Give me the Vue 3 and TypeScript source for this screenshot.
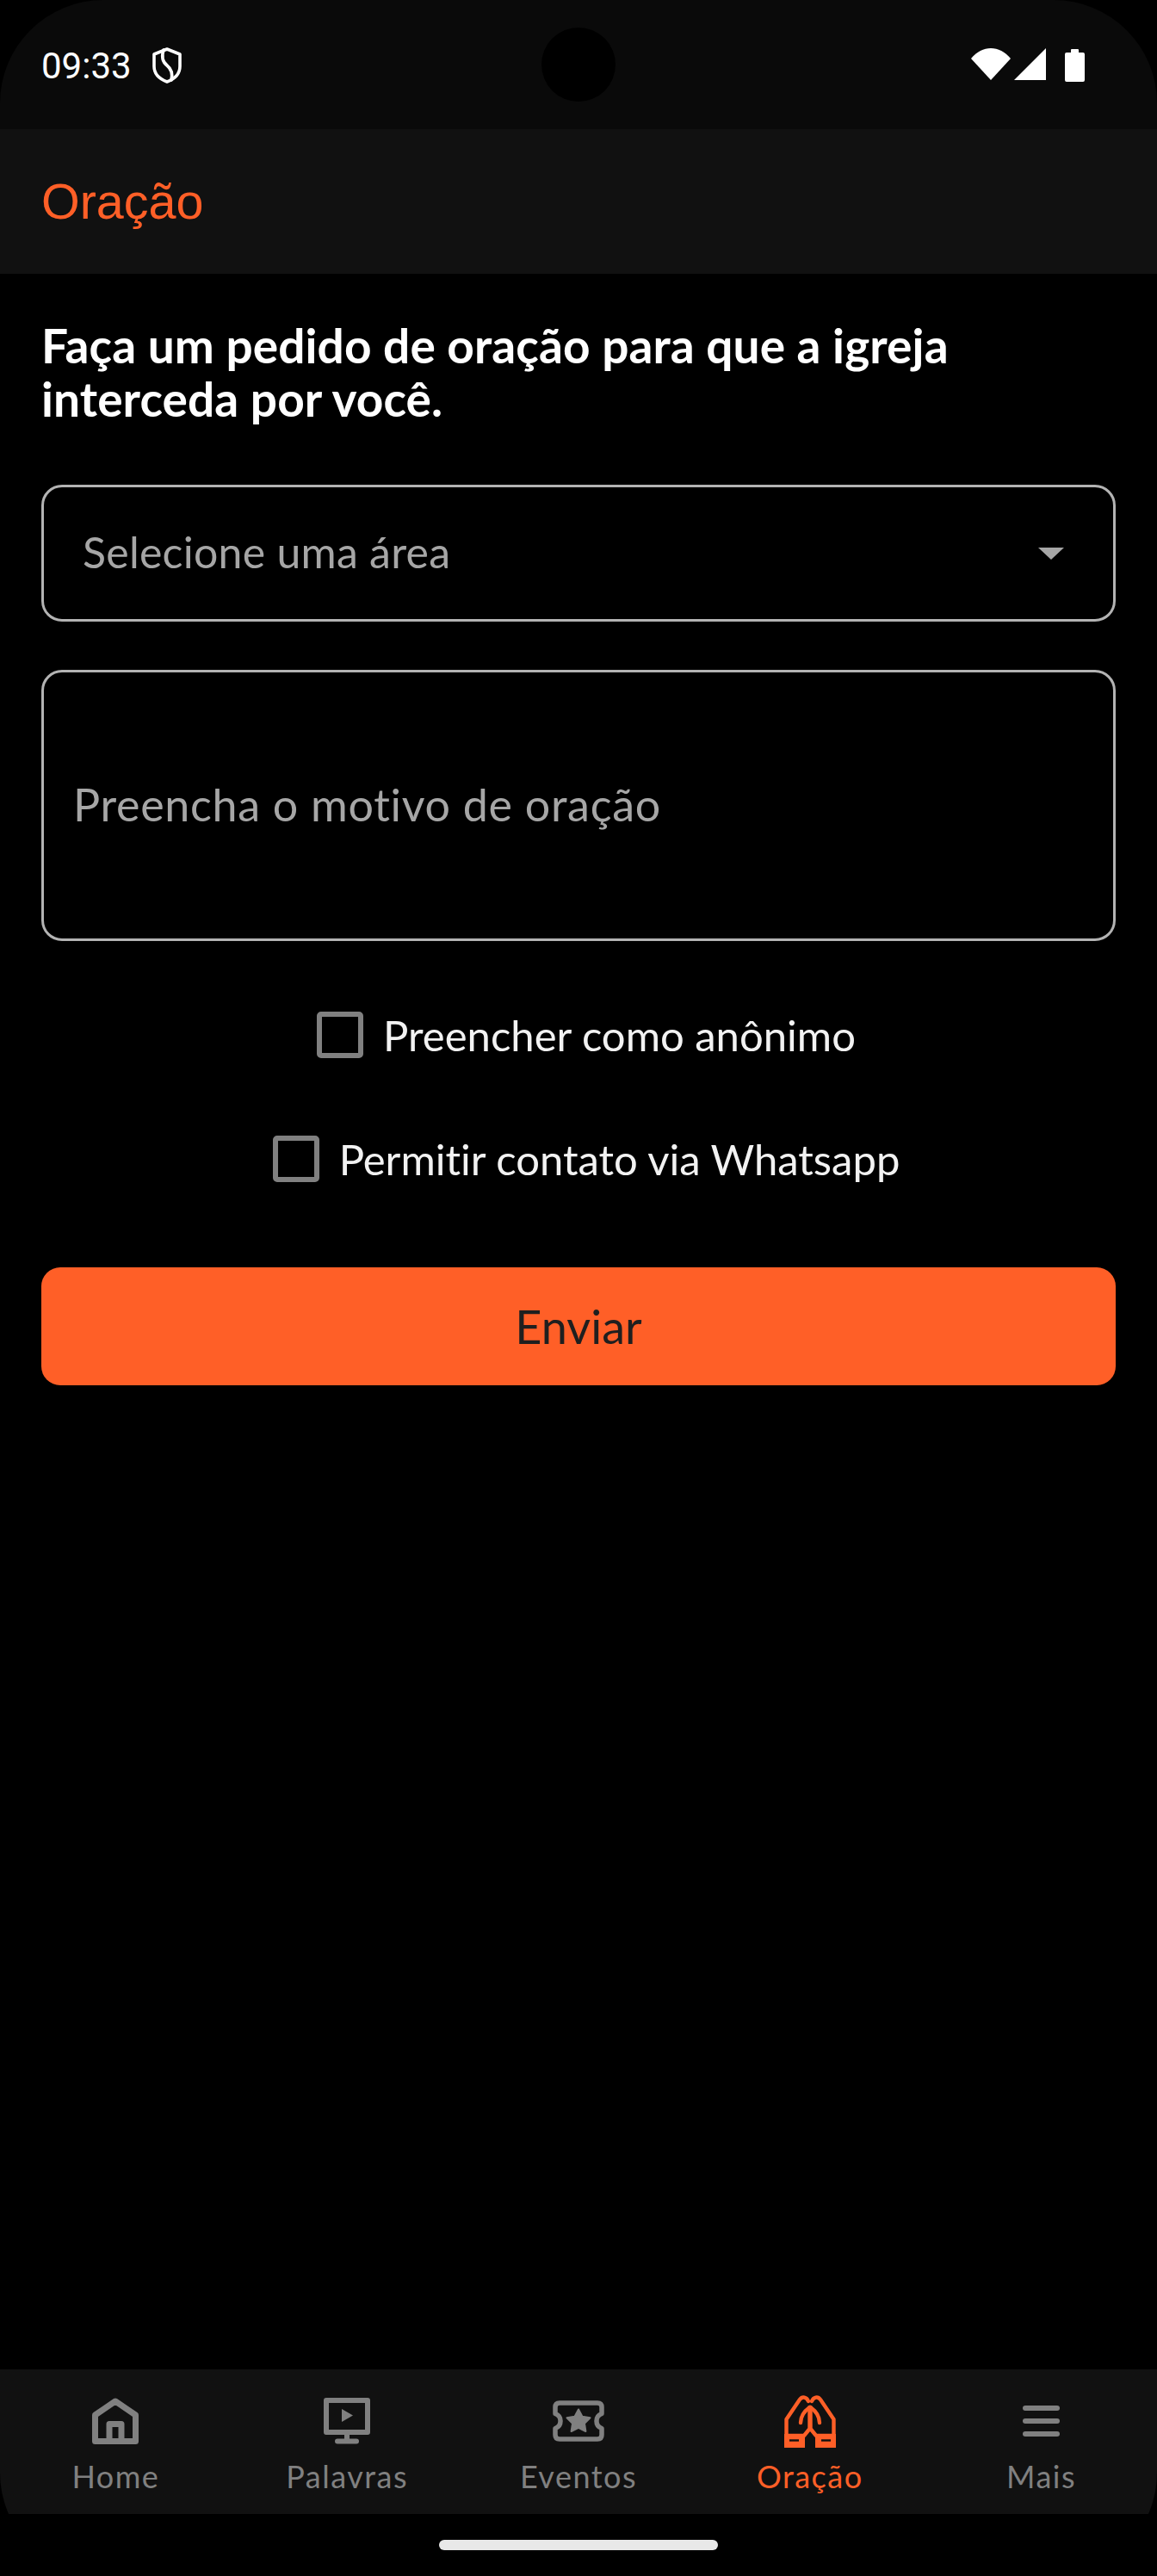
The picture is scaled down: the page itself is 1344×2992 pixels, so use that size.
<script setup lang="ts">
// Tela de pedido de oração: tudo vem destas listas para o template ficar curto
type Tab = { label: string; icon: string; active?: boolean }

const checks: string[] = ['Preencher como anônimo', 'Permitir contato via Whatsapp']

const tabs: Tab[] = [
  { label: 'Home', icon: 'home' },
  { label: 'Palavras', icon: 'screen' },
  { label: 'Eventos', icon: 'ticket' },
  { label: 'Oração', icon: 'pray', active: true },
  { label: 'Mais', icon: 'menu' },
]
</script>

<template>
  <div class="screen">
    <div class="statusbar">
      <div class="status-left">
        <span class="time">09:33</span>
        <svg class="shield" viewBox="0 0 34 42" fill="none" stroke="#fff" stroke-width="3.6" stroke-linejoin="round" stroke-linecap="round">
          <path d="M17 2 L32 8 V22 C32 31 25 37 17 40 C9 37 2 31 2 22 V8 Z" />
          <path d="M13 3 C10 12 12 17 17 21 C22 25 24 30 22 38" />
        </svg>
      </div>
      <div class="status-right">
        <svg class="wifi" viewBox="0 0 46 38"><path d="M0 13 C13 -3 33 -3 46 13 L23 38 Z" fill="#fff" /></svg>
        <svg class="signal" viewBox="0 0 37 37"><path d="M37 0 V37 H0 Z" fill="#fff" /></svg>
        <svg class="battery" viewBox="0 0 23 39"><path d="M7 2 a1 1 0 0 1 1 -1 h7 a1 1 0 0 1 1 1 v3 h5 a2 2 0 0 1 2 2 v30 a2 2 0 0 1 -2 2 h-19 a2 2 0 0 1 -2 -2 v-30 a2 2 0 0 1 2 -2 h5 Z" fill="#fff" /></svg>
      </div>
    </div>
    <div class="camera"></div>

    <header class="appbar">Oração</header>

    <main class="content">
      <h1 class="title">Faça um pedido de oração para que a igreja interceda por você.</h1>

      <div class="field select">
        <span>Selecione uma área</span>
        <svg class="caret" viewBox="0 0 30 14"><path d="M0 0 H30 L15 14 Z" fill="#a6a6a6" /></svg>
      </div>

      <div class="field textarea">Preencha o motivo de oração</div>

      <div class="checks">
        <label v-for="c in checks" :key="c" class="check">
          <span class="box"></span>
          <span>{{ c }}</span>
        </label>
      </div>

      <button class="send">Enviar</button>
    </main>

    <nav class="tabs">
      <div v-for="t in tabs" :key="t.label" class="tab" :class="{ active: t.active }">
        <div class="tab-icon">
          <svg v-if="t.icon === 'home'" width="54" height="54" viewBox="0 0 54 54" fill="none" stroke="#808080" stroke-width="7" stroke-linejoin="round">
            <path d="M3.5 50.5 V20 L27 4 L50.5 20 V50.5 Z" />
            <path d="M20 50.5 V30.5 H34 V50.5" />
          </svg>
          <svg v-else-if="t.icon === 'screen'" width="54" height="54" viewBox="0 0 54 54" fill="none" stroke="#808080" stroke-width="6">
            <rect x="3" y="3" width="48" height="37" stroke-linejoin="round" />
            <path d="M27 40 V49" />
            <path d="M16 50.5 H38" stroke-linecap="round" />
            <path d="M21 13 L34 20.5 L21 28 Z" fill="#808080" stroke="none" />
          </svg>
          <svg v-else-if="t.icon === 'ticket'" width="60" height="48" viewBox="0 0 60 48" fill="none" stroke="#808080" stroke-width="5.500" stroke-linejoin="round">
            <path d="M8 3 H52 Q57 3 57 8 V15.500 A9 9 0 0 0 57 32.500 V40 Q57 45 52 45 H8 Q3 45 3 40 V32.500 A9 9 0 0 0 3 15.500 V8 Q3 3 8 3 Z" />
            <path d="M30 10.500 L34.400 18.800 L43.500 20.300 L37 26.800 L38.400 36 L30 31.800 L21.600 36 L23 26.800 L16.500 20.300 L25.600 18.800 Z" fill="#808080" stroke="#808080" stroke-width="2" />
          </svg>
          <svg v-else-if="t.icon === 'pray'" width="60" height="61" viewBox="0 0 60 61" fill="none" stroke="#ff5f27" stroke-width="4.4" stroke-linejoin="round" stroke-linecap="round">
            <g>
              <path d="M28 7 C26 2 21 1 18 5 L2.500 28 V47 H23 L29.500 39 V14" />
              <path d="M29.500 14 C24 18 19 24 19 32" />
              <path d="M0 45 H24 V61 H0 Z" fill="#ff5f27" stroke="none" />
              <path d="M6 52.500 H17" stroke="#111" stroke-width="2.400" stroke-linecap="butt" />
            </g>
            <g transform="translate(60 0) scale(-1 1)">
              <path d="M28 7 C26 2 21 1 18 5 L2.500 28 V47 H23 L29.500 39 V14" />
              <path d="M29.500 14 C24 18 19 24 19 32" />
              <path d="M0 45 H24 V61 H0 Z" fill="#ff5f27" stroke="none" />
              <path d="M6 52.500 H17" stroke="#111" stroke-width="2.400" stroke-linecap="butt" />
            </g>
          </svg>
          <svg v-else width="43" height="36" viewBox="0 0 43 36" fill="#808080">
            <rect y="0" width="43" height="6" rx="3" />
            <rect y="15" width="43" height="6" rx="3" />
            <rect y="30" width="43" height="6" rx="3" />
          </svg>
        </div>
        <span class="tab-label">{{ t.label }}</span>
      </div>
    </nav>

    <div class="gesture">
      <div class="pill"></div>
    </div>
  </div>
</template>

<style>
html, body { background: #000; }
</style>

<style scoped>
.screen {
  position: relative;
  display: flex;
  flex-direction: column;
  width: 1344px;
  height: 2992px;
  overflow: hidden;
  border-radius: 120px;
  background: #000;
  font-family: Lato, "Noto Sans", sans-serif;
  font-variant-ligatures: none;
}
.statusbar {
  display: flex;
  justify-content: space-between;
  align-items: flex-start;
  flex: none;
  height: 150px;
  padding: 0 84px 0 48px;
  box-sizing: border-box;
  background: #0a0a0a;
}
.status-left { display: flex; align-items: center; height: 150px; }
.time {
  font: 42px/1 Roboto, sans-serif;
  color: #fff;
  position: relative;
  top: 2px;
}
.shield { width: 34px; height: 42px; margin-left: 24px; position: relative; top: 1px; }
.status-right { display: flex; align-items: flex-start; padding-top: 55px; }
.wifi { width: 46px; height: 38px; }
.signal { width: 37px; height: 37px; margin-left: 4px; margin-top: 1px; }
.battery { width: 23px; height: 39px; margin-left: 22px; margin-top: 1px; }
.camera {
  position: absolute;
  left: 629px;
  top: 32px;
  width: 86px;
  height: 86px;
  border-radius: 50%;
  background: #000;
}
.appbar {
  flex: none;
  height: 168px;
  padding-left: 48px;
  background: #111;
  color: #ff5f27;
  font: 57.5px/168px "Liberation Sans", sans-serif;
}
.content {
  flex: 1;
  display: flex;
  flex-direction: column;
  padding: 52px 48px 0;
}
.title {
  margin: 0 0 69px;
  font-size: 55px;
  line-height: 62px;
  font-weight: 700;
  letter-spacing: 0.1px;
  color: #fff;
}
.field {
  box-sizing: border-box;
  border: 3px solid #b3b3b3;
  border-radius: 24px;
  color: #a6a6a6;
}
.select {
  display: flex;
  align-items: center;
  justify-content: space-between;
  height: 159px;
  padding: 0 57px 4px 45px;
  font-size: 50px;
  letter-spacing: 0.25px;
}
.caret { width: 30px; height: 14px; margin-top: 4px; }
.textarea {
  display: flex;
  align-items: center;
  height: 315px;
  margin-top: 56px;
  padding: 0 0 4px 34px;
  font-size: 52px;
  letter-spacing: 0.7px;
}
.checks {
  display: flex;
  flex-direction: column;
  gap: 90px;
  margin-top: 82px;
}
.check {
  display: flex;
  align-items: center;
  justify-content: center;
  gap: 23px;
  padding-left: 18px;
  color: #f2f2f2;
  font-size: 49px;
  line-height: 54px;
}
.box {
  flex: none;
  box-sizing: border-box;
  width: 54px;
  height: 54px;
  border: 6px solid #808080;
  border-radius: 5px;
}
.send {
  height: 137px;
  margin-top: 99px;
  border: 0;
  border-radius: 22px;
  background: #ff5f27;
  color: #1f1f1f;
  font-family: inherit;
  font-variant-ligatures: none;
  font-size: 54px;
}
.tabs {
  flex: none;
  display: grid;
  grid-template-columns: repeat(5, 1fr);
  height: 168px;
  background: #111;
}
.tab {
  display: flex;
  flex-direction: column;
  align-items: center;
  color: #808080;
}
.tab.active { color: #ff5f27; }
.tab-icon {
  display: flex;
  align-items: center;
  justify-content: center;
  height: 60px;
  margin-top: 30px;
}
.tab-label {
  margin-top: 12px;
  font-size: 36px;
  line-height: 44px;
  letter-spacing: 1.500px;
}
.gesture {
  flex: none;
  height: 72px;
  padding-top: 30px;
  box-sizing: border-box;
}
.pill {
  width: 324px;
  height: 12px;
  margin: 0 auto;
  border-radius: 6px;
  background: #e8e8e8;
}
</style>
